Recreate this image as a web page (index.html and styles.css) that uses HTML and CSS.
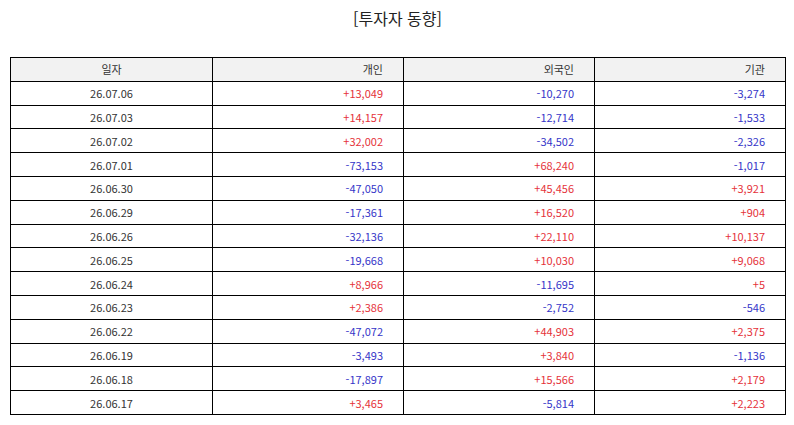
FILE: index.html
```html
<!DOCTYPE html>
<html lang="ko">
<head>
<meta charset="utf-8">
<link rel="stylesheet" href="styles.css">
</head>
<body>
<div class="page">
  <h1 class="title">[투자자 동향]</h1>
  <table class="grid">
    <colgroup>
      <col class="c-date"><col class="c-num"><col class="c-num"><col class="c-num">
    </colgroup>
    <thead>
      <tr><th class="date">일자</th><th>개인</th><th>외국인</th><th>기관</th></tr>
    </thead>
    <tbody>
      <tr><td class="date">26.07.06</td><td class="up">+13,049</td><td class="down">-10,270</td><td class="down">-3,274</td></tr>
      <tr><td class="date">26.07.03</td><td class="up">+14,157</td><td class="down">-12,714</td><td class="down">-1,533</td></tr>
      <tr><td class="date">26.07.02</td><td class="up">+32,002</td><td class="down">-34,502</td><td class="down">-2,326</td></tr>
      <tr><td class="date">26.07.01</td><td class="down">-73,153</td><td class="up">+68,240</td><td class="down">-1,017</td></tr>
      <tr><td class="date">26.06.30</td><td class="down">-47,050</td><td class="up">+45,456</td><td class="up">+3,921</td></tr>
      <tr><td class="date">26.06.29</td><td class="down">-17,361</td><td class="up">+16,520</td><td class="up">+904</td></tr>
      <tr><td class="date">26.06.26</td><td class="down">-32,136</td><td class="up">+22,110</td><td class="up">+10,137</td></tr>
      <tr><td class="date">26.06.25</td><td class="down">-19,668</td><td class="up">+10,030</td><td class="up">+9,068</td></tr>
      <tr><td class="date">26.06.24</td><td class="up">+8,966</td><td class="down">-11,695</td><td class="up">+5</td></tr>
      <tr><td class="date">26.06.23</td><td class="up">+2,386</td><td class="down">-2,752</td><td class="down">-546</td></tr>
      <tr><td class="date">26.06.22</td><td class="down">-47,072</td><td class="up">+44,903</td><td class="up">+2,375</td></tr>
      <tr><td class="date">26.06.19</td><td class="down">-3,493</td><td class="up">+3,840</td><td class="down">-1,136</td></tr>
      <tr><td class="date">26.06.18</td><td class="down">-17,897</td><td class="up">+15,566</td><td class="up">+2,179</td></tr>
      <tr><td class="date">26.06.17</td><td class="up">+3,465</td><td class="down">-5,814</td><td class="up">+2,223</td></tr>
    </tbody>
  </table>
</div>
</body>
</html>
```

FILE: styles.css
```css
html, body {
  margin: 0;
  padding: 0;
  background: #ffffff;
}
.page {
  padding: 8px 9px 0 10px;
  font-family: "Noto Sans CJK KR", "Noto Sans", sans-serif;
  color: #333333;
}
.title {
  margin: 0;
  height: 49px;
  font-size: 16px;
  font-weight: normal;
  line-height: 20px;
  text-align: center;
  color: #222222;
}
.grid {
  width: 775px;
  border-collapse: collapse;
  table-layout: fixed;
  font-size: 11px;
}
.c-date { width: 202px; }
.c-num { width: 191px; }
.grid th,
.grid td {
  border: 1px solid #000000;
  height: 23.8px;
  padding: 0 20px 0 0;
  box-sizing: border-box;
  text-align: right;
  font-weight: normal;
  line-height: 14px;
}
.grid th {
  background: #f2f2f2;
  color: #333333;
}
.grid .date {
  text-align: center;
  padding: 0;
}
.up { color: #e5323a; }
.down { color: #3535c8; }
```
